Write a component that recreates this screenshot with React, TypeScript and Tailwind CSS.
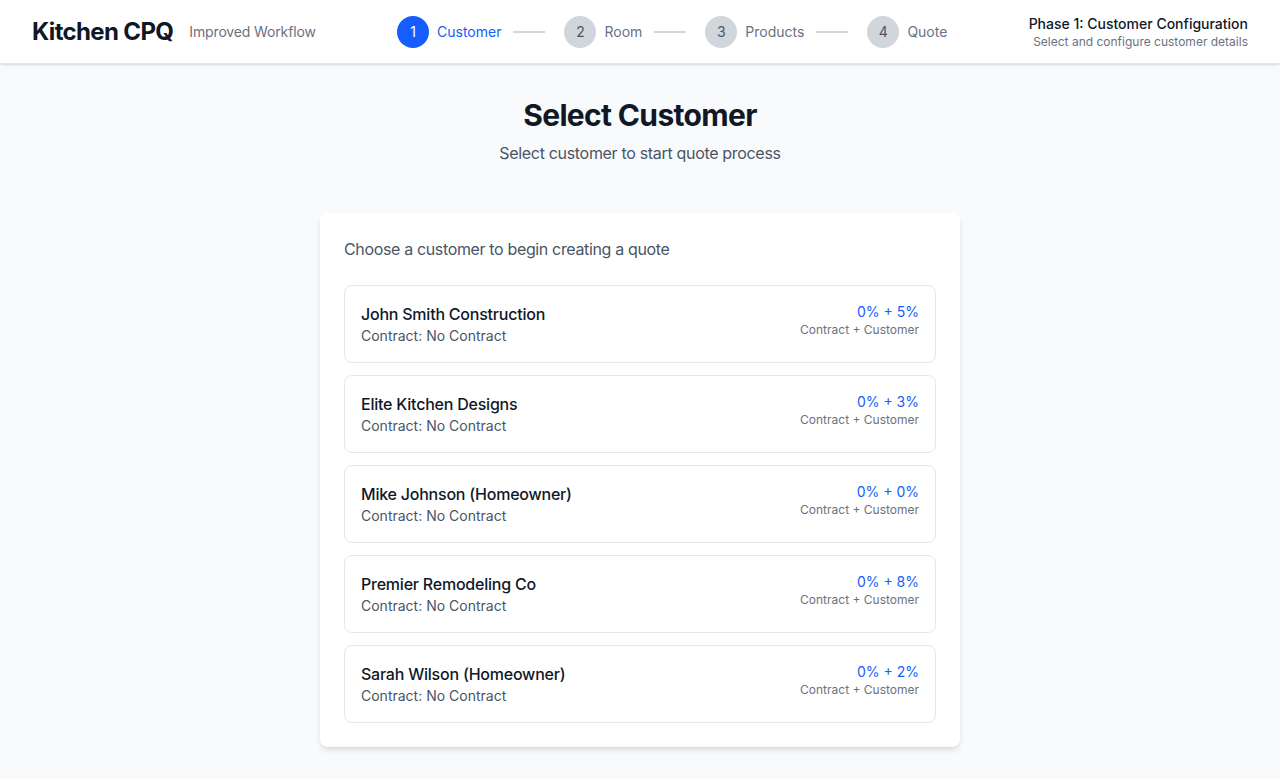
import React from "react";

const steps = [
  { n: 1, label: "Customer", active: true },
  { n: 2, label: "Room", active: false },
  { n: 3, label: "Products", active: false },
  { n: 4, label: "Quote", active: false },
];

const customers = [
  { name: "John Smith Construction", rate: "0% + 5%" },
  { name: "Elite Kitchen Designs", rate: "0% + 3%" },
  { name: "Mike Johnson (Homeowner)", rate: "0% + 0%" },
  { name: "Premier Remodeling Co", rate: "0% + 8%" },
  { name: "Sarah Wilson (Homeowner)", rate: "0% + 2%" },
];

export default function App() {
  return (
    <div className="min-h-screen bg-gray-50 font-['Inter',sans-serif]">
      {/* Header */}
      <header className="h-16 bg-white border-b border-gray-200 shadow-sm px-8 flex items-center justify-between">
        <div className="flex items-center">
          <h1 className="text-2xl font-bold text-gray-900 tracking-[-0.027em]">Kitchen CPQ</h1>
          <span className="ml-4 text-sm text-gray-500 tracking-[-0.01em]">Improved Workflow</span>
        </div>

        <div className="flex items-center">
          {steps.map((s, i) => (
            <div key={s.n} className={`flex items-center ${i > 0 ? "ml-[19px]" : ""}`}>
              <div
                className={`w-8 h-8 rounded-full flex items-center justify-center text-sm ${
                  s.active ? "bg-blue-600 text-white" : "bg-gray-300 text-gray-600"
                }`}
              >
                {s.n}
              </div>
              <span className={`ml-2 text-sm ${s.active ? "text-blue-600" : "text-gray-500"}`}>
                {s.label}
              </span>
              {i < steps.length - 1 && <div className="ml-3 w-8 h-0.5 bg-gray-300" />}
            </div>
          ))}
        </div>

        <div className="text-right">
          <div className="text-sm font-medium text-gray-900">Phase 1: Customer Configuration</div>
          <div className="text-xs text-gray-500">Select and configure customer details</div>
        </div>
      </header>

      {/* Main */}
      <main className="pt-[33px] pb-8 px-4">
        <div className="text-center mb-12">
          <h2 className="text-3xl font-bold text-gray-900 mb-2 tracking-[-0.022em]">Select Customer</h2>
          <p className="text-base text-gray-600 tracking-[-0.02em]">Select customer to start quote process</p>
        </div>

        <div className="w-[640px] mx-auto bg-white rounded-lg shadow-md p-6">
          <p className="text-base text-gray-600 mb-6 tracking-[-0.022em]">
            Choose a customer to begin creating a quote
          </p>
          <div className="space-y-3">
            {customers.map((c) => (
              <div
                key={c.name}
                className="border border-gray-200 rounded-lg p-4 flex items-start justify-between"
              >
                <div>
                  <div className="text-base font-medium text-gray-900 tracking-[-0.014em]">{c.name}</div>
                  <div className="text-sm text-gray-600">Contract: No Contract</div>
                </div>
                <div className="text-right">
                  <div className="text-sm text-blue-600">{c.rate}</div>
                  <div className="text-xs text-gray-500">Contract + Customer</div>
                </div>
              </div>
            ))}
          </div>
        </div>
      </main>
    </div>
  );
}
